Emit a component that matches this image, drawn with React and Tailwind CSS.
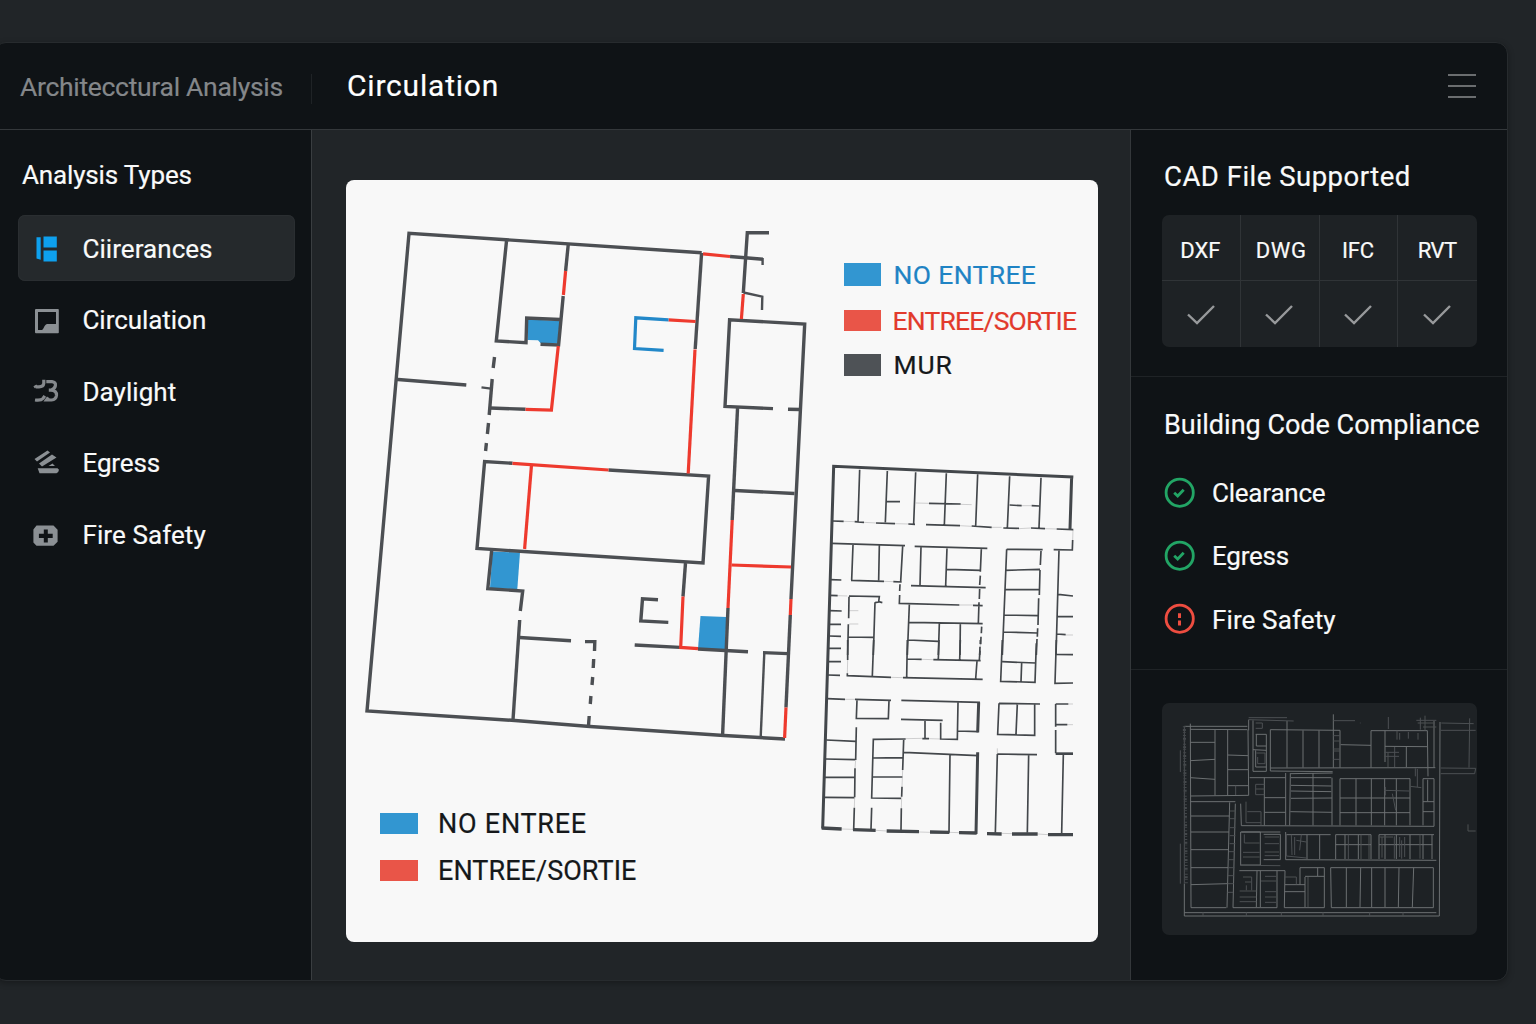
const FONT = 'font-["Roboto","Liberation_Sans",sans-serif]';

const PLAN_WALLS = [
  'M701.7 252.7L409 233.3L367 711L515 720.5L590 726.5L724 735.5L785 739',
  'M506.5 241L496.3 341L526 342.7L526.7 318L560 319.5',
  'M568.3 244L565.6 271', 'M563.2 296L558.6 345L540.5 344.2',
  'M490 408L525.5 409.3',
  'M494.5 357L493.2 368', 'M492.2 379L489.2 415', 'M488.5 423L487.4 434', 'M486.4 443L485.6 451',
  'M395 379.2L466.3 385',
  'M512.5 463.3L484.6 461.5L477 548.5L703 563L708.6 476L608.5 470',
  'M491.7 550L487.8 588.7L522.7 591L520.3 611',
  'M519.7 620L513 720', 'M519.5 637.5L571 640.7',
  'M585 641.6L594.8 641.6L594.5 651', 'M593.7 659L593.2 668', 'M592.7 677L592 685', 'M590.9 696L590.3 704', 'M589.2 716L588.4 727',
  'M701.6 253L695.2 349',
  'M730 256.5L763 259.2', 'M769 232.7L747.3 232.7L743.3 293',
  'M773 408.6L725 406.4L729.6 319.8L804.7 324L791 599', 'M788 409.2L800 409.5',
  'M790.3 615L786 707.5',
  'M737.6 407L732.2 520', 'M728 608L722.6 735',
  'M735 490.5L794.5 493.5',
  'M685.5 563L683 596.5', 'M634.7 645L680 647.4', 'M698 649L748 651.7',
  'M658 599.8L642.5 598.8L640.8 621L668.3 622.4',
  'M763 652.6L788 653.6',
];
const PLAN_THIN = ['M481.5 387.4L491 388.6', 'M762.6 258L762.6 265', 'M743.5 292.5L762.3 296.7L762 310', 'M764.3 653L760.7 737'];
const PLAN_RED = [
  'M565.6 271L563.4 295', 'M558.3 346L551.4 410L525.5 409.3', 'M512.5 463.3L608.5 470', 'M531.5 465L524.6 549',
  'M695 349.5L688.2 473.5', 'M668.5 319.8L695.5 321.5', 'M703 253.8L730 256.5', 'M743.3 294L741.4 319',
  'M732.2 520L728 608', 'M731.5 565L791 567', 'M683 596.5L680.7 647.4L698 648.6', 'M791 599L790.3 615', 'M786 707.5L784.6 738',
];
const PLAN_BLUE_AREAS = [
  'M528 319.5L559.5 320.8L558 343.5L540.5 343L538 340.3L527.5 340Z',
  'M492.5 551.5L520 552.5L517.3 589.3L490 588Z',
  'M700.5 616L726.5 617L725 649.5L698 649Z',
];

const NORTH_THIN = 'M134 44L129 200M217 48L211 202M302 52L296 206M394 55L388 210M488 58L482 214M584 64L577 219M678 68L672 218M215 139L255 140M342 145L437 147M584 150L620 152M650 152L672 153M53 198L86 199M119 200L147 202M183 204L240 206M280 207L300 208M333 209L435 212M470 213L530 217M565 219L612 220M648 219L690 221M725 222L775 224M773 255L772 285L716 284M50 265L270 272M299 274L517 280M114 270L110 375M193 272L191 376M263 274L257 380M47 374L79 375M108 376L207 379M235 380L260 381M255 388L254 408M254 420L253 445L433 450M474 451L503 452M318 276L315 390M396 278L392 393M499 282L496 350M496 362L494 390M494 402L493 432M492 442L490 505M288 392L512 398M396 343L496 346M283 449L277 600M283 502L503 506M373 506L370 600M436 506L435 600M500 515L499 535M498 545L497 568M495 575L494 600M280 555L370 559M44 421L68 422M102 423L193 425L191 440L202 443M180 442L175 600M102 425L101 490M100 508L98 600M180 443L192 441M100 546L176 547M44 467L80 468M44 508L78 508M42 543L78 544M40 580L78 580M575 283L562 600M575 283L683 284M678 288L676 330M675 345L673 420M671 430L669 510M668 520L667 545M666 552L664 600M571 346L675 343M569 404L672 404M567 480L670 482M565 531L667 534M732 286L723 600M730 418L774 423M727 484L774 485M725 537L752 539M723 598L774 599';
const NORTH_FAINT = 'M302 144L342 145M437 148L470 149M620 152L650 152M86 199L119 200M147 202L183 204M240 206L280 207M435 212L470 214M530 217L560 217M612 221L648 219M690 221L725 222M774 225L773 255M207 379L235 380M433 450L474 450M68 422L97 423M103 467L130 467M103 507L130 507M752 540L774 540';
const SOUTH_THIN = 'M40 65L78 65M38 105L75 106M98 0L98 60M97 100L97 107L228 112M176 0L172 107M277 0L275 113M372 0L370 57M278 57L320 58M355 59L497 62M436 0L434 60M496 0L496 12M495 32L493 60M486 63L482 117M264 113L503 118M562 0L557 124L660 127L664 10M562 65L662 69M620 68L618 125M724 0L720 130L774 129M36 176L90 178M120 178L228 181M126 180L124 235L220 236L222 181M124 262L122 360M120 385L119 472M118 503L116 570M259 181L495 187M429 188L427 298L377 297L377 248M258 238L383 241M330 240L330 295M322 296L342 296M429 273L490 275M552 190L675 192M552 190L548 283L659 286L659 192M607 191L603 283M722 192L760 192M722 192L722 260M722 270L722 340M722 253L757 254M34 300L122 304M32 357L120 359M30 412L118 412M28 472L118 473M272 297L175 298L170 474L258 475M266 300L263 390M261 440L260 470M259 505L258 570M173 354L262 353M173 411L262 411M170 503L168 568M266 337L490 347M405 345L402 578M547 342L666 344M547 342L541 578M641 344L637 578M745 344L740 580';
const SOUTH_FAINT = 'M320 58L355 59M98 60L97 100M496 12L495 32M228 112L264 113M90 178L120 178M122 360L120 385M119 472L118 503M263 390L261 440M260 470L259 505M272 296L322 295M342 296L377 297M547 325L547 342M760 192L774 192M757 254L774 254M80 567L114 568M182 571L215 573M312 576L345 577M403 577L432 578M560 580L591 581M668 582L699 584';

const PREVIEW_BRIGHT = 'M104 108L293 108M122 117L293 118M122 100L124 652L230 652M104 580L104 677L869 677L871 95M297 88L297 120M295 118L297 315L122 317M196 118L196 315M234 118L234 315M122 156L196 156M122 211L196 207M122 262L196 267M234 194L295 196M234 238L295 238M234 286L295 286M122 334L257 334M240 336L232 652M257 340L250 652L382 652M124 377L240 377M124 425L238 425M124 478L238 478M124 532L236 532M124 583L234 580M310 90L310 243L350 243L350 132L318 132M320 132L320 167L350 167M318 180L318 230L350 230M310 178L350 180M362 118L362 242L549 244M362 233L857 232M362 118L571 120L571 232M412 92L412 232M460 120L460 232M508 120L508 232M551 72L551 232M573 163L664 165M664 232L664 121L833 121M706 121L706 215M706 168L832 169M770 169L770 230M833 121L835 258M853 92L853 232M300 262L408 262M344 262L344 405M408 248L408 405M344 322L408 322M344 366L408 366M422 248L420 405M424 250L549 248M424 262L545 262M424 285L545 287M424 302L545 304M424 324L547 323M422 364L547 366M490 248L490 405M547 262L547 405M571 265L781 265L781 405M571 265L571 405M619 265L619 405M665 265L665 405M705 265L705 405M740 265L740 405M571 323L781 323M571 367L781 367M820 265L853 265L853 408L275 406L273 340M820 265L820 405M820 334L853 334M820 364L853 364M834 268L834 333M273 425L332 425L332 524M273 425L273 524L332 524M342 432L392 432L392 508L342 508M275 425L392 425M408 425L408 508L860 510M410 433L543 433M472 433L472 506M510 433L510 506M558 433L664 433L664 506M558 433L558 506M558 463L664 463M586 433L586 506M626 433L626 506M688 433L853 433M688 433L688 506M688 463L848 463M706 433L706 506M740 433L740 506M781 433L781 506M820 433L820 506M847 433L847 506M269 541L406 541L404 652L524 652L524 532L451 532L451 583M406 583L466 583M404 604L466 604M466 560L466 650M466 558L524 558M504 532L504 557M543 532L851 532L851 652L545 652L543 532M590 532L590 650M633 532L631 650M666 532L666 650M706 532L706 650M748 532L746 650M792 532L788 650M322 541L320 650M332 541L332 650M382 541L382 652M104 667L860 667';
const PREVIEW_DIM = 'M297 88L432 92M297 82L412 82M551 91L616 91M632 97L632 99M716 80L716 116M800 90L860 90M875 98L972 100M873 120L978 120M873 233L978 234L975 250L873 250M960 84L958 232M955 402L955 422L978 422M104 108L104 580M92 180L92 245M92 460L92 580M289 334L289 397L334 397M293 364L334 364M334 364L334 405M318 282L344 282M318 282L318 313L344 313M318 296L344 296M320 188L346 188L346 220L324 220L324 200M318 98L338 98L338 114L318 114M742 121L742 148M750 128L750 148M776 125L776 145M805 128L805 148M704 186L748 186M704 198L748 198M715 186L715 230M735 170L735 230M797 234L797 258M803 236L803 290M782 288L815 292M704 300L778 302M728 310L738 360M707 290L707 315M240 362L257 362M240 385L257 385M240 412L257 412M240 436L257 436M240 460L257 460M238 484L256 484M237 508L255 508M236 532L254 532M235 556L252 556M234 580L252 580M234 606L250 606M284 432L284 458L330 458M280 486L330 486M280 500L330 500M345 440L388 440M345 460L388 460M345 485L388 485M345 496L388 496M410 433L410 497L470 503M425 433L427 494M435 440L435 494M455 433L450 480M440 450L470 455M596 433L596 506M634 433L634 506M658 433L658 506M697 440L697 502M734 438L734 505M750 440L750 500M756 450L756 505M765 440L765 500M811 433L811 505M690 440L730 440M271 525L392 526M270 602L320 602M270 620L320 620M270 634L320 634M280 560L306 560L306 600M286 575L304 575M346 558L380 558M334 572L380 572M346 604L380 604M346 620L380 620M346 636L380 636M290 585L290 600M475 560L475 650M440 560L440 582M406 560L440 560M160 666L160 677M290 666L290 677M395 666L395 677M520 666L520 677M660 666L660 677M760 666L760 677M551 136L571 136M551 152L571 152M551 176L571 176M551 182L571 182M551 207L571 207M258 286L258 314M812 82L812 118M826 76L826 120M804 98L856 98M820 110L860 110';

const Paths = ({ list, ...rest }) => (
  <g fill="none" {...rest}>
    {list.map((d) => <path key={d} d={d} />)}
  </g>
);

function FloorPlans() {
  return (
    <svg className="block size-full" viewBox="346 180 752 762">
      <g fill="#3296d1">{PLAN_BLUE_AREAS.map((d) => <path key={d} d={d} />)}</g>
      <Paths list={PLAN_WALLS} stroke="#4c4f53" strokeWidth="3.4" />
      <Paths list={PLAN_THIN} stroke="#4c4f53" strokeWidth="2.4" />
      <Paths list={PLAN_RED} stroke="#ee3a2e" strokeWidth="3.2" />
      <path d="M668.5 319.8L635.8 317.8L634.5 348.6L663.6 350.4" fill="none" stroke="#2288c9" strokeWidth="3.2" />
      <g fill="none" stroke="#43474b" transform="translate(815 455) scale(.33333)">
        <path d="M775 66L56 34L23 1121M770 64L765 222" strokeWidth="9" />
        <path d={NORTH_THIN} strokeWidth="5" />
        <path d={NORTH_FAINT} strokeWidth="2" opacity=".35" />
      </g>
      <g fill="none" stroke="#43474b" transform="translate(815 640) scale(.33333)">
        <path d="M722 341L774 341" strokeWidth="8" />
        <path d="M488 337L483 582M491 187L488 277" strokeWidth="9" />
        <path d="M20 564L80 567M114 569L182 571M215 573L312 575M345 576L403 577M432 578L485 579M516 581L560 582M591 582L668 582M699 584L774 584" strokeWidth="10" />
        <path d={SOUTH_THIN} strokeWidth="5" />
        <path d={SOUTH_FAINT} strokeWidth="2" opacity=".35" />
      </g>
    </svg>
  );
}

function ClearanceIcon() {
  return <svg className="size-8 shrink-0" viewBox="0 0 32 32" fill="#0ea0ee"><path d="M6.500 5.200h4.200v22.600L6.500 26.600zM13.500 4.400h13.300v11.200H13.500zM13.500 18.400h13.300v11.200H13.500z" /></svg>;
}
function CirculationIcon() {
  return <svg className="mt-[3px] size-8 shrink-0" viewBox="0 0 32 32" fill="#8b9094"><path fillRule="evenodd" d="M6 4h22a.8.8 0 0 1 .8.8v22.600a.8.8 0 0 1-.8.8H6a1 1 0 0 1-1-1V5a1 1 0 0 1 1-1zm2 3v18h4c2-1 2-5 5-6h9V7z" /></svg>;
}
function DaylightIcon() {
  return (
    <svg className="mt-[2px] size-8 shrink-0" viewBox="0 0 32 32" fill="none" stroke="#85898d" strokeWidth="3.2">
      <path d="M13.800 3.800v3.600q-.4 3.600-5.200 3.400h-3" />
      <path d="M4 11.200l3-1.600" strokeWidth="2.400" />
      <path d="M5 24q6 .8 8-1.500l1.800-2.600" />
      <path d="M16.300 5.600h5.700q4 .6 3.400 4-.5 3-3.600 4.200M18.800 14.200h2.200q5.800.5 5.500 5.200-.5 4.300-5 4.600h-5l1.800-2.600" />
    </svg>
  );
}
function EgressIcon() {
  return (
    <svg className="mt-[2px] size-8 shrink-0" viewBox="0 0 32 32" fill="#8b9094">
      <path d="M4.500 12L17.500 3.500L20 5.500L7 14.500zM9 16.500L22 7.500L26.500 10.500L12 19.500zM18.500 19L22.500 16.500L25 19zM7.700 21.200H27.500L29 22.800Q28.500 26 26.500 26.300H9.500z" />
    </svg>
  );
}
function FireIcon() {
  return <svg className="mt-[6px] size-8 shrink-0" viewBox="0 0 32 32" fill="#8b9094"><path fillRule="evenodd" d="M6.500 4.600h17L27.600 8.700v12L23.500 24.700h-17L3.400 21.500v-13zM13.800 8.600v4.200H8.900v4.200h4.900v4.500h4V17h4.900v-4.200h-4.900V8.600z" /></svg>;
}

const NAV = [
  { label: 'Ciirerances', Icon: ClearanceIcon, active: true, cls: 'tracking-[0.05px] pt-[2.500px]' },
  { label: 'Circulation', Icon: CirculationIcon, cls: 'tracking-[-0.05px] pt-[1px]' },
  { label: 'Daylight', Icon: DaylightIcon, cls: 'tracking-[0.05px] pt-[1.500px]' },
  { label: 'Egress', Icon: EgressIcon, cls: 'tracking-[-0.15px] pt-[1px]' },
  { label: 'Fire Safety', Icon: FireIcon, cls: 'tracking-[0.08px] pt-[3px]' },
];

const FORMATS = [
  { name: 'DXF', cls: 'tracking-[0px] pr-[1px]', check: 'pl-[1px]' },
  { name: 'DWG', cls: 'tracking-[0.6px] pl-[3px]', check: 'pr-[1px]' },
  { name: 'IFC', cls: 'tracking-[-0.2px] pr-[1px]', check: 'pr-0' },
  { name: 'RVT', cls: 'tracking-[-0.6px] pr-[1px]', check: 'pr-[2px]' },
];

function Status({ ok }) {
  return (
    <svg className="size-8 shrink-0" viewBox="0 0 32 32" fill="none" strokeWidth="2.800" stroke={ok ? '#22a565' : '#ee4d40'}>
      <circle cx="15.700" cy="15.700" r="13.600" />
      {ok ? <path d="M10.200 15.700L13.700 19L19.700 12.700" /> : <path d="M15.500 10.200v4.700M15.500 17.400v5" strokeWidth="3" />}
    </svg>
  );
}

const CHECKS = [
  { label: 'Clearance', ok: true, cls: 'tracking-[-0.22px]' },
  { label: 'Egress', ok: true, cls: 'tracking-[-0.22px]' },
  { label: 'Fire Safety', ok: false, cls: 'tracking-[0.12px] pt-[2px]' },
];

export default function App() {
  return (
    <div className={`h-[1024px] w-[1536px] overflow-hidden bg-[#212528] pt-[42px] text-[#f9fafa] [-webkit-text-stroke:0.2px] ${FONT}`}>
      <div className="-ml-[6px] flex h-[939px] w-[1514px] flex-col overflow-hidden rounded-[12px] border border-[#272b2e] bg-[#0f1316] shadow-[0_2px_6px_rgba(0,0,0,0.3)]">
        <header className="flex h-[87px] shrink-0 items-center border-b border-[#34383b] pl-[5px]">
          <div className="w-[311px] pl-[20px] pt-[1px] text-[26.5px] leading-8 tracking-[-0.3px] text-[#84878a]">Architecctural Analysis</div>
          <div className="mt-[5px] h-[30px] w-px self-center bg-[#1f2326]" />
          <h1 className="flex-1 pl-[35px] text-[30px] leading-9 tracking-[0.8px] text-white">Circulation</h1>
          <button aria-label="Menu" className="mr-[31px] flex h-[24px] w-[28px] flex-col justify-between">
            <span className="h-[2px] w-full bg-[#6a6d6f]" />
            <span className="h-[2px] w-full bg-[#6a6d6f]" />
            <span className="h-[2px] w-full bg-[#6a6d6f]" />
          </button>
        </header>

        <div className="flex min-h-0 flex-1">
          <aside className="w-[317px] shrink-0 border-r border-[#3a3e41] pl-[5px] pt-[29px]">
            <h2 className="pl-[22px] text-[26px] leading-8 tracking-[-0.15px]">Analysis Types</h2>
            <nav className="ml-[18px] mt-[24px] flex w-[277px] flex-col gap-[5.400px]">
              {NAV.map(({ label, Icon, active, cls }) => (
                <a key={label} className={`flex h-[66px] items-center rounded-[7px] pl-[12px] ${active ? 'bg-[#25292c] shadow-[inset_0_0_0_1px_#2a2e31]' : ''}`}>
                  <Icon />
                  <span className={`ml-[20.500px] text-[26px] leading-8 ${cls}`}>{label}</span>
                </a>
              ))}
            </nav>
          </aside>

          <main className="w-[818px] shrink-0 bg-[#212528] pl-[34px] pt-[50px]">
            <div className="relative h-[762px] w-[752px] overflow-hidden rounded-[8px] bg-[#f8f8f8]">
              <FloorPlans />
              <ul className="absolute left-[498px] top-[78px] flex flex-col text-[26.5px] leading-[32px]">
                <li className="flex h-[46px] items-start">
                  <i className="mt-[5px] h-[23px] w-[37px] bg-[#3296d1]" />
                  <span className="ml-[12.500px] pt-[1px] tracking-[0.35px] text-[#1f83c4]">NO ENTREE</span>
                </li>
                <li className="flex h-[44px] items-start">
                  <i className="mt-[6px] h-[21px] w-[37px] bg-[#e95548]" />
                  <span className="ml-[11.500px] pt-[1px] tracking-[-0.8px] text-[#e23a2c]">ENTREE/SORTIE</span>
                </li>
                <li className="flex items-start">
                  <i className="mt-[6px] h-[22px] w-[37px] bg-[#4e5256]" />
                  <span className="ml-[12.500px] pt-[1px] tracking-[0.9px] text-[#15181a]">MUR</span>
                </li>
              </ul>
              <ul className="absolute left-[34px] top-[628px] flex flex-col text-[27px] leading-[32px] text-[#15181a]">
                <li className="flex h-[46.500px] items-start">
                  <i className="mt-[5px] h-[21px] w-[38px] bg-[#3296d1]" />
                  <span className="ml-[20px] tracking-[0.75px]">NO ENTREE</span>
                </li>
                <li className="flex items-start">
                  <i className="mt-[5px] h-[21px] w-[38px] bg-[#e95548]" />
                  <span className="ml-[20px] tracking-[0.05px]">ENTREE/SORTIE</span>
                </li>
              </ul>
            </div>
          </main>

          <aside className="flex min-w-0 flex-1 flex-col border-l border-[#34383b]">
            <section className="h-[247px] shrink-0 border-b border-[#1f2326] pl-[31px] pt-[31px]">
              <h2 className="pl-[2px] text-[27.500px] leading-8 tracking-[0.5px]">CAD File Supported</h2>
              <div className="mt-[22px] grid h-[132px] w-[315px] grid-cols-4 grid-rows-[66px_66px] overflow-hidden rounded-[7px] bg-[#1e2225]">
                {FORMATS.map((f) => (
                  <div key={f.name} className={`flex items-center justify-center border-b border-[#303437] pt-[6px] text-[22px] leading-7 not-last:border-r nth-[4]:border-r-0 ${f.cls}`}>{f.name}</div>
                ))}
                {FORMATS.map((f) => (
                  <div key={f.name} className={`flex items-center justify-center border-[#303437] pt-[1px] not-last:border-r ${f.check}`}>
                    <svg className="h-[22px] w-[30px]" viewBox="0 0 30 22" fill="none" stroke="#97999b" strokeWidth="2.400"><path d="M2 10.500L11 19L28 2" /></svg>
                  </div>
                ))}
              </div>
            </section>

            <section className="h-[293px] shrink-0 border-b border-[#1f2326] pl-[33px] pt-[32px]">
              <h2 className="text-[27px] leading-8">Building Code Compliance</h2>
              <ul className="mt-[20px] flex flex-col">
                {CHECKS.map((c) => (
                  <li key={c.label} className="flex h-[63px] items-center">
                    <Status ok={c.ok} />
                    <span className={`ml-[16px] text-[26px] leading-8 ${c.cls}`}>{c.label}</span>
                  </li>
                ))}
              </ul>
            </section>

            <section className="pl-[31px] pt-[33px]">
              <div className="h-[232px] w-[315px] overflow-hidden rounded-[7px] bg-[#1e2225]">
                <svg className="block size-full" viewBox="37 38 945 696" fill="none">
                  <path d={PREVIEW_BRIGHT} stroke="#6c7072" strokeWidth="3" />
                  <path d={PREVIEW_DIM} stroke="#4c5053" strokeWidth="3" />
                  <path d="M104 108L110 580" stroke="#44484b" strokeWidth="9" strokeDasharray="3 5 6 3 2 7" />
                </svg>
              </div>
            </section>
          </aside>
        </div>
      </div>
    </div>
  );
}
